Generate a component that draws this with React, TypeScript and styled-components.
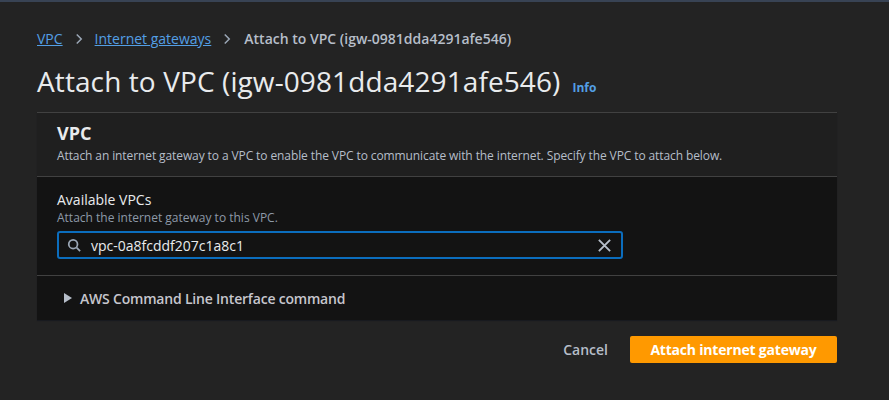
import React from "react";
import styled, { createGlobalStyle } from "styled-components";

const Global = createGlobalStyle`
  html, body { margin: 0; padding: 0; background: #232323; }
  body { font-family: "Open Sans", "Noto Sans", sans-serif; color: #e9ebed; }
`;

const TopLine = styled.div`
  height: 2px;
  background: #384354;
`;

const Page = styled.div`
  padding: 0 52px 0 37px;
  width: 800px;
`;

const Breadcrumbs = styled.nav`
  display: flex;
  align-items: center;
  gap: 10px;
  height: 20px;
  margin-top: 27px;
  font-size: 14px;
  line-height: 20px;
`;

const Crumb = styled.a`
  color: #539fe5;
  text-decoration: underline;
  cursor: pointer;
`;

const Current = styled.span`
  color: #b6bec9;
  font-weight: 600;
  margin-left: 1px;
`;

const Chevron = styled.svg`
  width: 12px;
  height: 12px;
  color: #9ba7b6;
`;

const TitleRow = styled.div`
  display: flex;
  align-items: baseline;
  gap: 12px;
  margin-top: 14px;
  height: 36px;
`;

const Title = styled.h1`
  margin: 0;
  font-size: 28px;
  font-weight: 400;
  line-height: 36px;
  color: #e9ebed;
  letter-spacing: 0.1px;
`;

const InfoLink = styled.a`
  font-size: 12px;
  font-weight: 700;
  color: #539fe5;
`;

const Container = styled.section`
  margin-top: 13px;
  border-top: 1px solid #414141;
  background: #131313;
  box-shadow: 0 1px 1px rgba(0, 7, 22, 0.3);
`;

const Header = styled.header`
  background: #1f1f1f;
  padding: 9px 20px 12px;
  border-bottom: 1px solid #414141;
`;

const HeaderTitle = styled.h2`
  margin: 0;
  font-size: 18px;
  font-weight: 700;
  line-height: 22px;
  color: #e9ebed;
`;

const Description = styled.p`
  margin: 4px 0 0;
  font-size: 12px;
  line-height: 16px;
  color: #b6bec9;
  letter-spacing: -0.1px;
`;

const Body = styled.div`
  padding: 13px 20px 16px;
  border-bottom: 1px solid #414141;
`;

const Label = styled.label`
  display: block;
  font-size: 14px;
  line-height: 20px;
  color: #e9ebed;
`;

const FieldDesc = styled.div`
  font-size: 12px;
  line-height: 16px;
  color: #8d99a8;
`;

const InputBox = styled.div`
  margin-top: 5px;
  width: 566px;
  height: 28px;
  box-sizing: border-box;
  border: 2px solid #0b6dbd;
  border-radius: 3px;
  display: flex;
  align-items: center;
  padding: 0 9px 0 8px;
  gap: 10px;
`;

const InputText = styled.span`
  flex: 1;
  font-size: 14px;
  color: #e9ebed;
`;

const Expander = styled.div`
  height: 44px;
  display: flex;
  align-items: center;
  gap: 8px;
  padding-left: 27px;
  font-size: 14px;
  font-weight: 600;
  color: #c6c6cd;
  letter-spacing: -0.2px;
`;

const Actions = styled.div`
  display: flex;
  justify-content: flex-end;
  align-items: center;
  gap: 22px;
  margin-top: 16px;
`;

const CancelButton = styled.button`
  background: none;
  border: none;
  padding: 0;
  font-family: inherit;
  font-size: 14px;
  font-weight: 600;
  color: #b6bec9;
`;

const PrimaryButton = styled.button`
  width: 207px;
  height: 27px;
  background: #ff9900;
  border: none;
  border-radius: 2px;
  font-family: inherit;
  font-size: 14px;
  font-weight: 700;
  color: #ffffff;
  letter-spacing: -0.2px;
`;

const ChevronIcon = () => (
  <Chevron viewBox="0 0 16 16" fill="none" stroke="currentColor" strokeWidth="2">
    <path d="M5 2l6 6-6 6" />
  </Chevron>
);

export default function App() {
  return (
    <>
      <Global />
      <TopLine />
      <Page>
        <Breadcrumbs>
          <Crumb>VPC</Crumb>
          <ChevronIcon />
          <Crumb>Internet gateways</Crumb>
          <ChevronIcon />
          <Current>Attach to VPC (igw-0981dda4291afe546)</Current>
        </Breadcrumbs>
        <TitleRow>
          <Title>Attach to VPC (igw-0981dda4291afe546)</Title>
          <InfoLink>Info</InfoLink>
        </TitleRow>
        <Container>
          <Header>
            <HeaderTitle>VPC</HeaderTitle>
            <Description>
              Attach an internet gateway to a VPC to enable the VPC to communicate with the internet. Specify the VPC to attach below.
            </Description>
          </Header>
          <Body>
            <Label>Available VPCs</Label>
            <FieldDesc>Attach the internet gateway to this VPC.</FieldDesc>
            <InputBox>
              <svg width="14" height="14" viewBox="0 0 16 16" fill="none" stroke="#9ba7b6" strokeWidth="2">
                <circle cx="7" cy="7" r="5" />
                <path d="M11 11l4 4" />
              </svg>
              <InputText>vpc-0a8fcddf207c1a8c1</InputText>
              <svg width="15" height="15" viewBox="0 0 16 16" fill="none" stroke="#b6bec9" strokeWidth="2">
                <path d="M2 2l12 12M14 2L2 14" />
              </svg>
            </InputBox>
          </Body>
          <Expander>
            <svg width="8" height="10" viewBox="0 0 8 10">
              <path d="M0 0l8 5-8 5z" fill="#b6bec9" />
            </svg>
            AWS Command Line Interface command
          </Expander>
        </Container>
        <Actions>
          <CancelButton>Cancel</CancelButton>
          <PrimaryButton>Attach internet gateway</PrimaryButton>
        </Actions>
      </Page>
    </>
  );
}
